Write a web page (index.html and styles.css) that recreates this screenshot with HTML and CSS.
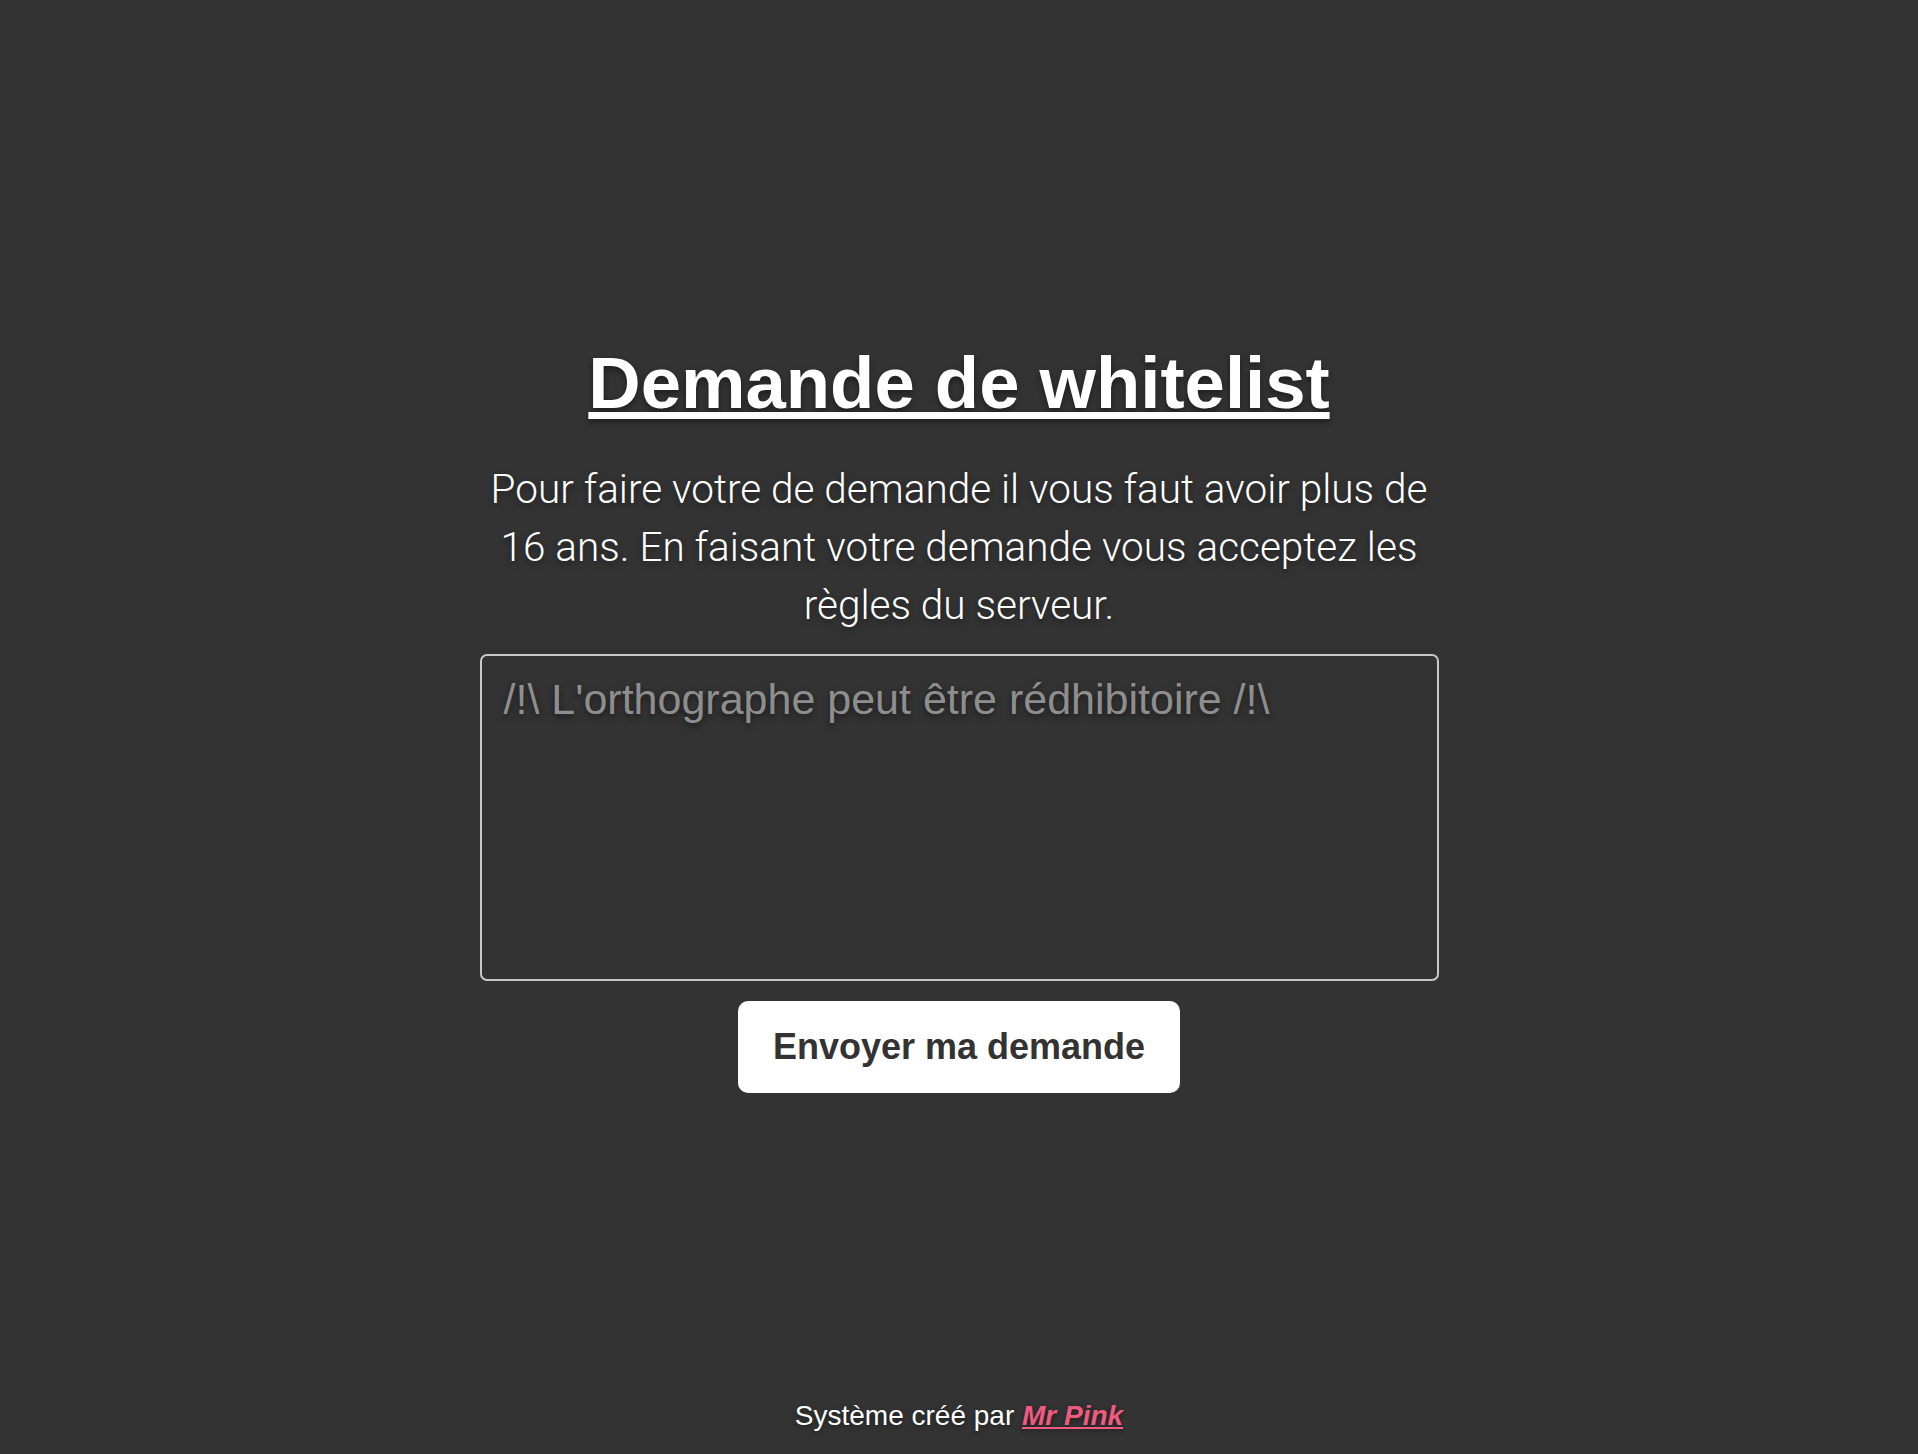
FILE: index.html
```html
<!DOCTYPE html>
<html lang="fr">
<head>
<meta charset="utf-8">
<title>Demande de whitelist</title>
<link rel="stylesheet" href="styles.css">
</head>
<body>
<main class="main">
  <form class="form">
    <h1 class="title">Demande de whitelist</h1>
    <p class="intro">Pour faire votre de demande il vous faut avoir plus de 16 ans. En faisant votre demande vous acceptez les règles du serveur.</p>
    <textarea class="request" placeholder="/!\ L'orthographe peut être rédhibitoire /!\"></textarea>
    <button type="button" class="submit">Envoyer ma demande</button>
  </form>
</main>
<footer class="footer">Système créé par <a class="author" href="#">Mr Pink</a></footer>
</body>
</html>
```
FILE: styles.css
```css
html, body {
  margin: 0;
  padding: 0;
}
body {
  background: #333333;
  color: #ffffff;
  font-family: "Liberation Sans", Arial, sans-serif;
  min-height: 100vh;
  display: flex;
  flex-direction: column;
}
.main {
  flex: 1;
  display: flex;
  justify-content: center;
  align-items: center;
  padding-top: 34px;
}
.form {
  width: 50%;
  display: flex;
  flex-direction: column;
  align-items: center;
}
.title {
  margin: 0;
  font-size: 72.5px;
  line-height: 1.15;
  font-weight: 700;
  text-decoration: underline;
  text-underline-offset: 4px;
  text-shadow: 0 3px 6px rgba(0, 0, 0, 0.45);
}
.intro {
  margin: 36px 0 0;
  font-family: Roboto, "Liberation Sans", sans-serif;
  font-weight: 300;
  font-size: 40.5px;
  line-height: 58px;
  text-align: center;
  text-shadow: 0 3px 6px rgba(0, 0, 0, 0.45);
}
.request {
  box-sizing: border-box;
  margin-top: 20px;
  width: 100%;
  height: 327px;
  padding: 19px 22px 17px;
  background: transparent;
  border: 2px solid #c9c9c9;
  border-radius: 7px;
  color: #ffffff;
  font-family: "Liberation Sans", Arial, sans-serif;
  font-size: 43px;
  resize: none;
  outline: none;
  text-shadow: 0 3px 6px rgba(0, 0, 0, 0.45);
}
.request::placeholder {
  color: #8e8e8e;
  text-shadow: 0 3px 6px rgba(0, 0, 0, 0.5);
}
.submit {
  margin-top: 20px;
  background: #ffffff;
  color: #333333;
  border: none;
  border-radius: 10px;
  padding: 26px 35px;
  font-family: "Liberation Sans", Arial, sans-serif;
  font-weight: 700;
  font-size: 36px;
  line-height: 40px;
  cursor: pointer;
}
.footer {
  text-align: center;
  font-size: 28px;
  line-height: 32px;
  padding-bottom: 22px;
  text-shadow: 0 2px 5px rgba(0, 0, 0, 0.45);
}
.author {
  color: #ef5a7f;
  font-weight: 700;
  font-style: italic;
  text-decoration: underline;
}
```
